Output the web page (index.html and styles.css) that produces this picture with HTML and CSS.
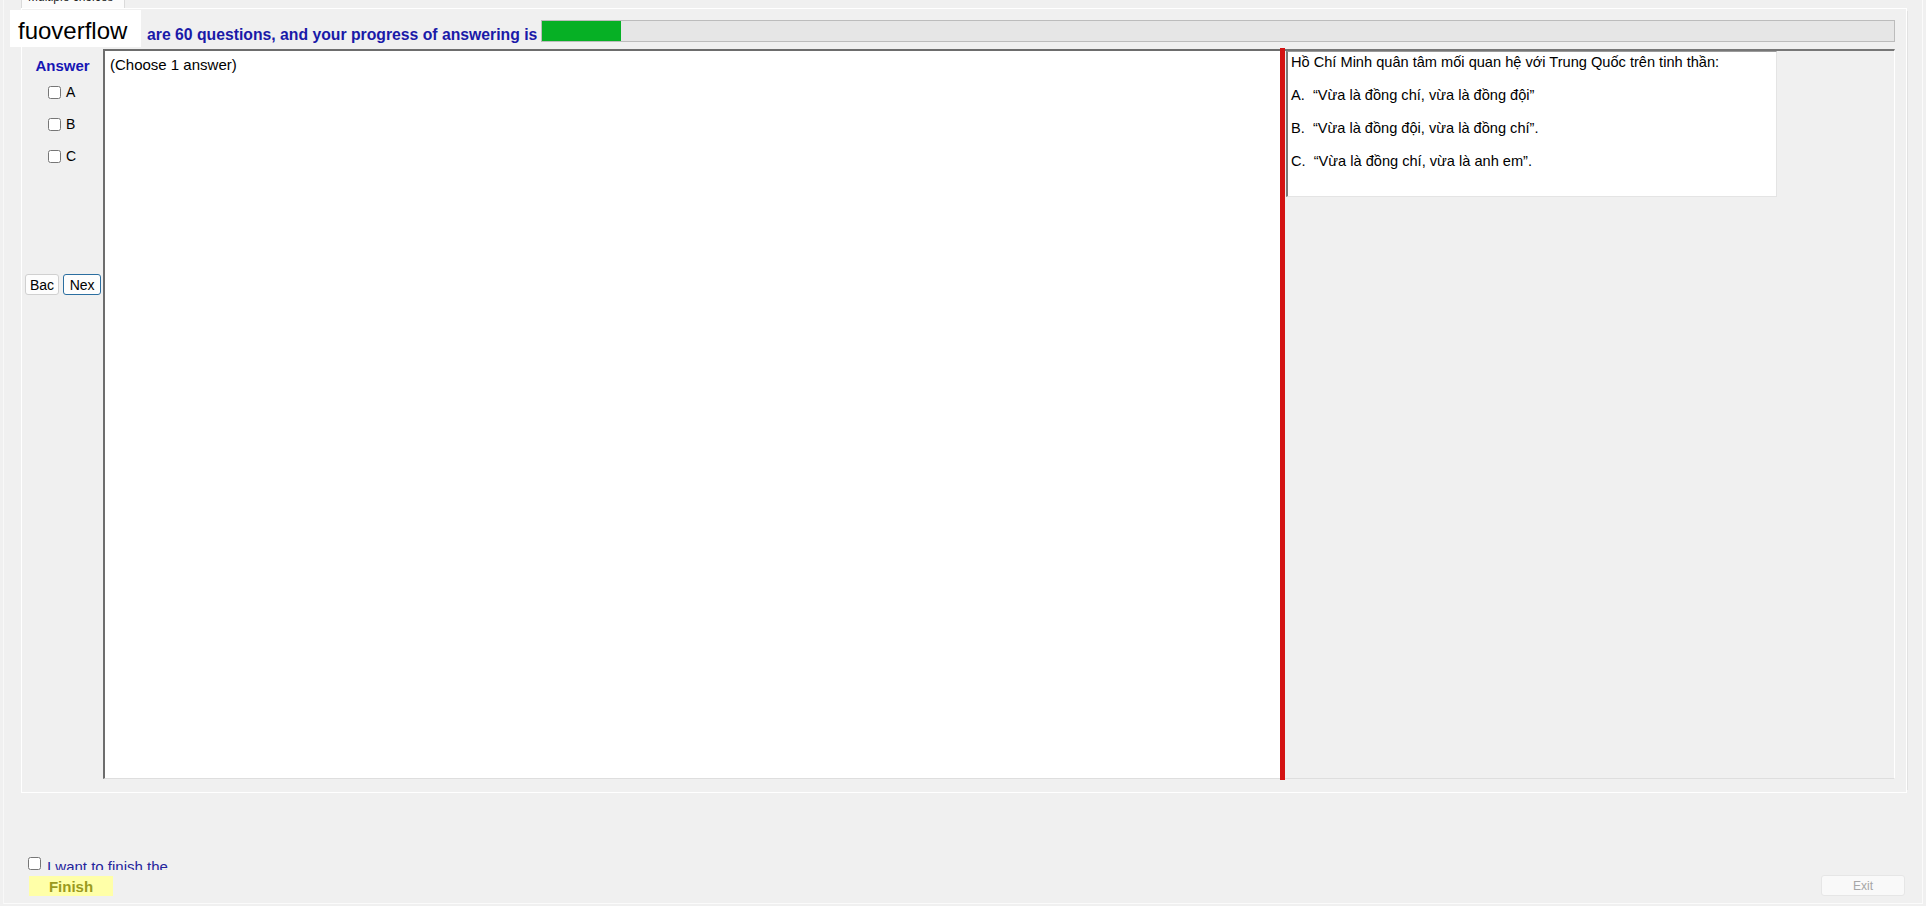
FILE: index.html
```html
<!DOCTYPE html>
<html lang="vi">
<head>
    <meta charset="UTF-8">
    <meta name="viewport" content="width=device-width, initial-scale=1.0">
    <title>Multiple choices</title>
    <link rel="stylesheet" href="styles.css">
</head>
<body>
    <div class="window">
        <div class="tabstrip">
            <div class="tab"><span>Multiple choices</span></div>
        </div>

        <div class="page">
            <div class="brand">fuoverflow</div>

            <div class="header">
                <span class="count">are 60 questions, and your progress of answering is</span>
                <div class="progress"><div class="progress-fill" style="width: 5.8%"></div></div>
            </div>

            <div class="main">
                <div class="side">
                    <div class="side-title">Answer</div>
                    <label class="option"><input type="checkbox"> A</label>
                    <label class="option"><input type="checkbox"> B</label>
                    <label class="option"><input type="checkbox"> C</label>
                    <div class="nav">
                        <button class="btn">Bac</button>
                        <button class="btn btn-focus">Nex</button>
                    </div>
                </div>

                <div class="answer-box">(Choose 1 answer)</div>
                <div class="splitter"></div>

                <div class="question-area">
                    <div class="question">
                        <p>Hồ Chí Minh quân tâm mối quan hệ với Trung Quốc trên tinh thần:</p>
                        <p>A.&nbsp; “Vừa là đồng chí, vừa là đồng đội”</p>
                        <p>B.&nbsp; “Vừa là đồng đội, vừa là đồng chí”.</p>
                        <p>C.&nbsp; “Vừa là đồng chí, vừa là anh em”.</p>
                    </div>
                </div>
            </div>
        </div>

        <div class="footer">
            <label class="finish-check"><input type="checkbox"> <span>I want to finish the</span></label>
            <div class="footer-buttons">
                <button class="finish">Finish</button>
                <button class="exit" disabled>Exit</button>
            </div>
        </div>
    </div>
</body>
</html>
```

FILE: styles.css
```css
body {
    margin: 0;
    background-color: #f0f0f0;
    font-family: "Liberation Sans", Arial, sans-serif;
    font-size: 15px;
    color: #000;
}
.window {
    position: relative;
    width: 1920px;
    height: 904px;
    box-sizing: border-box;
    margin-left: 3px;
    border-left: 1px solid #f8f8f8;
    border-right: 1px solid #fbfbfb;
    border-bottom: 1px solid #fbfbfb;
}
.tabstrip {
    height: 8px;
    padding-left: 17px;
}
.tab {
    width: 104px;
    height: 8px;
    overflow: hidden;
    background-color: #fbfbfb;
    border-left: 1px solid #dadada;
    border-right: 1px solid #dadada;
    box-sizing: border-box;
    font-size: 12px;
    color: #222;
}
.tab span {
    display: block;
    margin-top: -10px;
    padding-left: 6px;
    line-height: 14px;
}
.page {
    margin-left: 17px;
    width: 1886px;
    height: 785px;
    box-sizing: border-box;
    border: 1px solid #fff;
    box-shadow: 4px 0 0 -3px #e2e2e2;
    padding-right: 11px;
}
.brand {
    position: absolute;
    left: 6px;
    top: 10px;
    width: 131px;
    height: 37px;
    box-sizing: border-box;
    padding: 7px 0 3px 8px;
    line-height: 27px;
    font-size: 24px;
    background-color: #fff;
}
.header {
    display: flex;
    align-items: flex-start;
    height: 40px;
    padding-left: 125px;
}
.count {
    margin-top: 17px;
    line-height: 18px;
    font-size: 15.75px;
    font-weight: bold;
    color: #1a1aa8;
    white-space: nowrap;
}
.progress {
    flex: 1;
    height: 22px;
    margin: 11px 0 0 4px;
    border: 1px solid #bcbcbc;
    box-sizing: border-box;
    background-color: #e6e6e6;
}
.progress-fill {
    height: 100%;
    background-color: #06b025;
}
.main {
    display: flex;
    height: 730px;
}
.side {
    width: 81px;
    padding-top: 8px;
}
.side-title {
    text-align: center;
    font-weight: bold;
    color: #1616b4;
    line-height: 17px;
    margin-bottom: 2px;
}
.option {
    display: flex;
    align-items: center;
    height: 32px;
    padding-left: 26px;
    font-size: 14px;
    gap: 5px;
}
.option input, .finish-check input {
    margin: 0;
    width: 13px;
    height: 13px;
}
.nav {
    display: flex;
    gap: 4px;
    margin-top: 102px;
    padding-left: 3px;
}
.btn {
    height: 21px;
    padding: 0 4px;
    font-family: "Liberation Sans", Arial, sans-serif;
    font-size: 14px;
    background-color: #fdfdfd;
    border: 1px solid #d0d0d0;
    border-radius: 3px;
    color: #000;
}
.btn-focus {
    border-color: #2b6ea0;
    width: 38px;
}
.answer-box {
    width: 1177px;
    box-sizing: border-box;
    background-color: #fff;
    border-top: 2px solid #6d6d6d;
    border-left: 2px solid #6d6d6d;
    border-bottom: 1px solid #dedede;
    padding: 5px 0 0 5px;
    line-height: 17px;
}
.splitter {
    width: 5px;
    margin: -1px 0 -1px;
    background-color: #d41313;
}
.question-area {
    flex: 1;
    border-top: 2px solid #777;
    border-right: 1px solid #fff;
    border-bottom: 1px solid #dedede;
}
.question {
    width: 491px;
    height: 146px;
    margin-left: 1px;
    box-sizing: border-box;
    background-color: #fff;
    border-left: 2px solid #7a7a7a;
    border-top: 1px solid #9a9a9a;
    border-right: 1px solid #e4e4e4;
    border-bottom: 1px solid #e4e4e4;
    padding: 2px 0 0 3px;
    font-size: 14.6px;
}
.question p {
    margin: 0 0 16px;
    line-height: 17px;
    white-space: nowrap;
}
.footer {
    padding: 61px 17px 0 24px;
}
.finish-check {
    display: flex;
    align-items: flex-start;
    gap: 6px;
    width: 140px;
    height: 16px;
    overflow: hidden;
    white-space: nowrap;
    color: #24249c;
}
.finish-check input {
    margin-top: 3px;
    flex-shrink: 0;
}
.finish-check span {
    line-height: 17px;
    margin-top: 4px;
}
.footer-buttons {
    display: flex;
    justify-content: space-between;
    align-items: flex-start;
    margin-top: 6px;
}
.finish {
    width: 84px;
    height: 20px;
    margin-left: 1px;
    border: none;
    background-color: #ffffa8;
    color: #9a9a1e;
    font-family: "Liberation Sans", Arial, sans-serif;
    font-size: 15px;
    font-weight: bold;
}
.exit {
    width: 84px;
    height: 21px;
    margin-top: -1px;
    border: 1px solid #e6e6e6;
    border-radius: 3px;
    background-color: #f9f9f9;
    color: #a6a6a6;
    font-family: "Liberation Sans", Arial, sans-serif;
    font-size: 12px;
}
```
